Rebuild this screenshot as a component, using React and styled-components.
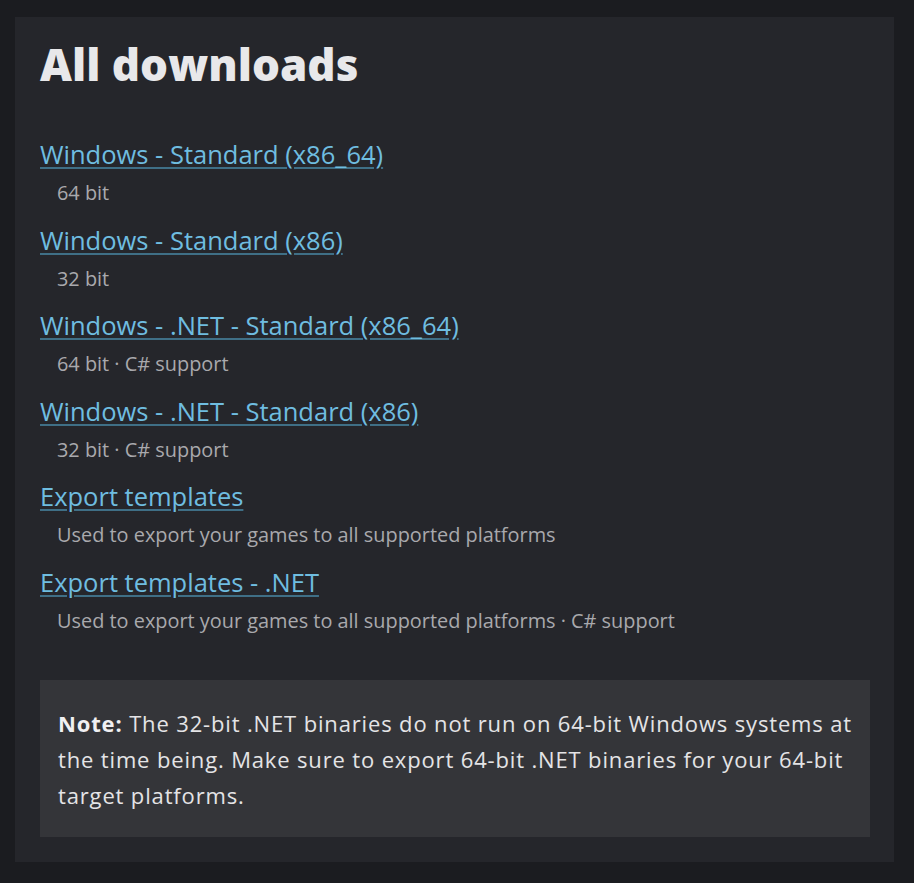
import React from 'react';
import styled, { createGlobalStyle } from 'styled-components';

const GlobalStyle = createGlobalStyle`
    html, body {
        margin:0;
        padding:0;
        background:#1b1c20;
    }
`;

const Page = styled.div`
    width:914px;
    height:883px;
    box-sizing:border-box;
    padding:17px 20px 21px 15px;
    background:#1b1c20;
`;

const Panel = styled.section`
    height:100%;
    box-sizing:border-box;
    background:#25262b;
    padding:17px 24px 0 25px;
    font-family:"Open Sans", "Noto Sans", sans-serif;
`;

const Title = styled.h2`
    margin:0 0 44px 0;
    font-family:"Open Sans", sans-serif;
    font-weight:800;
    font-size:44px;
    line-height:60px;
    color:#e8e8ea;
`;

const List = styled.div`
    display:flex;
    flex-direction:column;
`;

const Item = styled.div`
    display:flex;
    flex-direction:column;
    height:85.6px;
`;

const DownloadLink = styled.a`
    font-size:25.5px;
    line-height:32px;
    color:#6fbde0;
    text-decoration:underline;
    text-decoration-color:#3f6f86;
    text-underline-offset:3px;
    align-self:flex-start;
    cursor:pointer;
`;

const Caption = styled.span`
    margin-top:10px;
    padding-left:17px;
    font-size:19.9px;
    line-height:26px;
    color:#a9a9ad;
`;

const Note = styled.div`
    margin-top:28px;
    background:#343539;
    padding:25px 12px 24px 18px;
    font-size:22px;
    line-height:36px;
    letter-spacing:0.85px;
    color:#e4e4e6;
    b {
        font-weight:700;
        color:#f0f0f2;
    }
`;

const downloads = [
    { name: 'Windows - Standard (x86_64)', info: '64 bit' },
    { name: 'Windows - Standard (x86)', info: '32 bit' },
    { name: 'Windows - .NET - Standard (x86_64)', info: '64 bit · C# support' },
    { name: 'Windows - .NET - Standard (x86)', info: '32 bit · C# support' },
    { name: 'Export templates', info: 'Used to export your games to all supported platforms' },
    { name: 'Export templates - .NET', info: 'Used to export your games to all supported platforms · C# support' },
];

export default function App() {
    return (
        <Page>
            <GlobalStyle />
            <Panel>
                <Title>All downloads</Title>
                <List>
                    {downloads.map(d => (
                        <Item key={d.name}>
                            <DownloadLink>{d.name}</DownloadLink>
                            <Caption>{d.info}</Caption>
                        </Item>
                    ))}
                </List>
                <Note>
                    <b>Note:</b> The 32-bit .NET binaries do not run on 64-bit Windows systems at the time being. Make sure to export 64-bit .NET binaries for your 64-bit target platforms.
                </Note>
            </Panel>
        </Page>
    );
}
